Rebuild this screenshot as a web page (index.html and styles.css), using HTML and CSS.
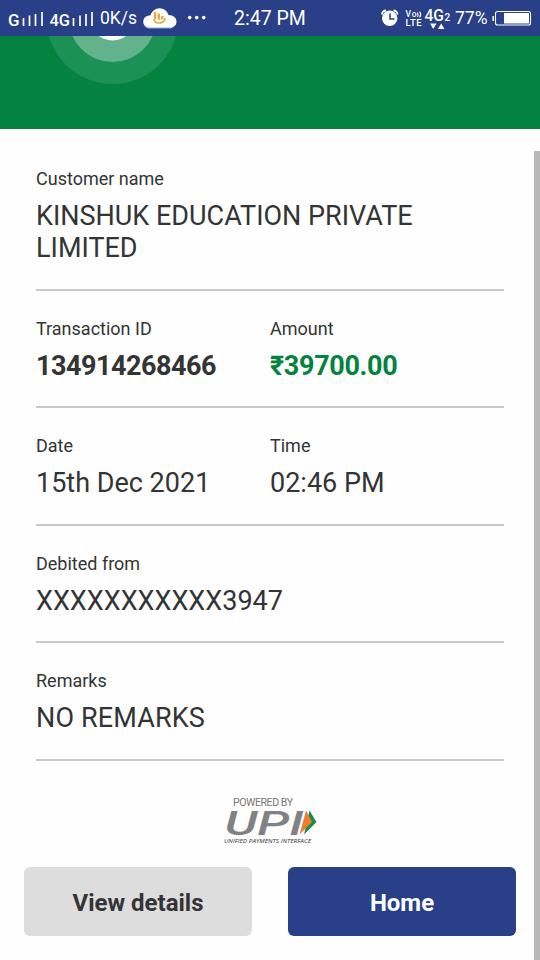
FILE: index.html
```html
<!DOCTYPE html>
<html lang="en">
<head>
<meta charset="utf-8">
<title>Payment receipt</title>
<link rel="stylesheet" href="styles.css">
</head>
<body>
<div class="screen">
  <header class="status">
    <svg class="sig1" width="41" height="36" viewBox="5 0 41 36">
      <text class="net" x="8" y="26" font-size="17" textLength="11.5" lengthAdjust="spacingAndGlyphs">G</text>
      <path class="bars" d="M23.500 18v8M29.500 15.500v10.500M35.500 14v12M42 12v14"/>
    </svg>
    <svg class="sig2" width="49" height="36" viewBox="46 0 49 36">
      <text class="net" x="49.500" y="26" font-size="17" textLength="20.500" lengthAdjust="spacingAndGlyphs">4G</text>
      <path class="bars" d="M73.500 18v8M80 15.500v10.500M86 14v12M92 12v14"/>
    </svg>
    <span class="speed">0K/s</span>
    <svg class="cloud" width="36" height="36" viewBox="142 0 36 36">
      <path fill="#7eaaf0" d="M149 28.500a6 6 0 0 1 1-12 9.500 9.500 0 0 1 18.500-.5A6.500 6.500 0 0 1 171 28.500z"/>
      <path fill="#fff" d="M149 27.500a5.800 5.800 0 0 1 .5-12h1A9.300 9.300 0 0 1 168.500 15c5 0 8 3 8 6.500s-2.500 6-6 6z"/>
      <path d="M155 12v7.500M158.800 13.500v6M162.300 16v3.500" fill="none" stroke="#f2a33a" stroke-width="2.300"/>
      <path d="M153.800 19c1 5.500 10 5.500 11.500-1" fill="none" stroke="#eda33f" stroke-width="1.500"/>
    </svg>
    <svg class="dots" width="20" height="36" viewBox="187 0 20 36" fill="#fff">
      <circle cx="189.700" cy="17.600" r="1.800"/><circle cx="196.700" cy="17.600" r="1.800"/><circle cx="203.700" cy="17.600" r="1.800"/>
    </svg>
    <span class="clock">2:47 PM</span>
    <svg class="alarm" width="20" height="36" viewBox="380 0 20 36">
      <circle cx="389.700" cy="18.200" r="7.700" fill="#fff"/>
      <path d="M382 14.500a4 4 0 0 1 4-4M397.500 14.500a4 4 0 0 0-4-4" fill="none" stroke="#fff" stroke-width="1.800"/>
      <path d="M390 13.500v5.500h4.500" fill="none" stroke="#293f87" stroke-width="1.500"/>
    </svg>
    <svg class="volte" width="18" height="36" viewBox="405 0 18 36">
      <text class="tiny" x="405.500" y="17.300" font-size="8.500" textLength="11">Vo</text>
      <path d="M417.500 12.500q1 2.300 0 4.500M419.700 11.500q2 3 0 6" fill="none" stroke="#fff" stroke-width="1.100"/>
      <text class="tiny" x="405.500" y="26" font-size="9.500" textLength="16">LTE</text>
    </svg>
    <svg class="data" width="28" height="36" viewBox="424 0 28 36">
      <text class="net" x="424.500" y="21" font-size="17" textLength="19.500" lengthAdjust="spacingAndGlyphs">4G</text>
      <text class="net" x="444.500" y="21" font-size="10">2</text>
      <path fill="#fff" d="M430 23.500h6.500l-3.200 5.500zM438 29l3.200-5.500 3.200 5.500z"/>
    </svg>
    <span class="percent">77%</span>
    <svg class="battery" width="42" height="36" viewBox="490 0 42 36">
      <path d="M493.200 16v5" stroke="#fff" stroke-width="1.500"/>
      <rect x="495.500" y="11.500" width="35" height="13.500" rx="2" fill="none" stroke="#fff" stroke-width="1.100"/>
      <path fill="#fff" d="M504 13h25v10.500h-25z"/>
    </svg>
  </header>
  <section class="hero">
    <svg width="540" height="93" viewBox="0 36 540 93">
      <circle cx="112.500" cy="18" r="66" fill="#1c9156"/>
      <circle cx="112.500" cy="18" r="44" fill="#62b28b"/>
      <circle cx="112.500" cy="18" r="22.500" fill="#fff"/>
    </svg>
  </section>
  <main class="receipt">
    <div class="row first"><div class="field"><div class="label">Customer name</div><div class="value">KINSHUK EDUCATION PRIVATE LIMITED</div></div></div>
    <div class="row">
      <div class="field"><div class="label">Transaction ID</div><div class="value strong">134914268466</div></div>
      <div class="field"><div class="label">Amount</div><div class="value strong green">₹39700.00</div></div>
    </div>
    <div class="row">
      <div class="field"><div class="label">Date</div><div class="value">15th Dec 2021</div></div>
      <div class="field"><div class="label">Time</div><div class="value">02:46 PM</div></div>
    </div>
    <div class="row"><div class="field"><div class="label">Debited from</div><div class="value">XXXXXXXXXXX3947</div></div></div>
    <div class="row"><div class="field"><div class="label">Remarks</div><div class="value wide">NO REMARKS</div></div></div>
  </main>
  <div class="brand">
    <svg width="100" height="52" viewBox="220 794 100 52">
      <text class="powered" x="233" y="805.600" font-size="10.500" textLength="60">POWERED BY</text>
      <text class="upi" x="224.500" y="834.500" font-size="33" textLength="79" lengthAdjust="spacingAndGlyphs">UPI</text>
      <path fill="#178d49" d="M309.500 810.500l7 11.500-12.500 12.500z"/>
      <path fill="#f07b2c" d="M306 810.500l6 11.500-12.500 12.500z"/>
      <text class="unified" x="224" y="843" font-size="6" textLength="87" lengthAdjust="spacingAndGlyphs">UNIFIED PAYMENTS INTERFACE</text>
    </svg>
  </div>
  <footer class="actions">
    <button class="btn secondary">View details</button>
    <button class="btn primary">Home</button>
  </footer>
  <div class="scrollbar"></div>
</div>
</body>
</html>
```
FILE: styles.css
```css
* { box-sizing: border-box; }
body { margin: 0; background: #fff; }
svg { display: block; flex: none; }
.screen {
  position: relative;
  width: 540px;
  height: 960px;
  overflow: hidden;
  background: #fefefe;
  color: #333435;
  font-family: Roboto, "Liberation Sans", sans-serif;
}
.status {
  display: flex;
  height: 36px;
  padding-left: 5px;
  background: #293f87;
  color: #fff;
  line-height: 37px;
  white-space: nowrap;
}
.net { fill: #fff; font-family: Roboto, sans-serif; font-weight: 500; }
.tiny { fill: #fff; font-family: Roboto, sans-serif; font-weight: 500; }
.bars { stroke: #fff; stroke-width: 1.7; fill: none; }
.speed { width: 37px; margin-left: 5px; font-size: 17.5px; }
.cloud { margin-left: 5px; }
.dots { margin-left: 9px; }
.clock { width: 72px; margin-left: 27px; font-size: 19.5px; }
.alarm { margin-left: 74px; }
.volte { margin-left: 5px; }
.data { margin-left: 1px; }
.percent { width: 33px; margin-left: 3px; font-size: 17.5px; }
.battery { margin-left: 2px; }
.hero { height: 93px; background: #03833f; }
.receipt { padding: 12px 36px 0; }
.row {
  display: flex;
  height: 117.4px;
  padding-top: 27px;
  border-bottom: 2px solid #c8c8c8;
}
.row.first { height: 150px; }
.first .field { width: 100%; }
.field { width: 234px; }
.label { font-size: 18px; line-height: 21px; }
.value { margin-top: 10.9px; font-size: 27px; line-height: 32px; }
.strong { font-weight: 700; letter-spacing: -0.5px; }
.strong.green { letter-spacing: -0.35px; }
.wide { letter-spacing: 0.15px; }
.green { color: #03833f; }
.brand { display: flex; justify-content: center; padding-top: 33.4px; }
.powered { fill: #777; font-family: Roboto, sans-serif; }
.upi { fill: #808184; font-family: Roboto, sans-serif; font-weight: 500; font-style: italic; }
.unified { fill: #333; font-family: "Open Sans", sans-serif; font-style: italic; font-weight: 500; }
.actions { display: flex; gap: 36px; padding: 21px 24px 0; }
.btn {
  flex: 1;
  height: 69px;
  padding: 3px 0 0;
  border: 0;
  border-radius: 6px;
  font: 700 24px Roboto, "Liberation Sans", sans-serif;
}
.secondary { background: #ddd; color: #333435; }
.primary { background: #293f87; color: #fff; }
.scrollbar {
  position: absolute;
  top: 151px;
  right: 0;
  width: 6px;
  height: 809px;
  background: #b7b7b7;
}
```
